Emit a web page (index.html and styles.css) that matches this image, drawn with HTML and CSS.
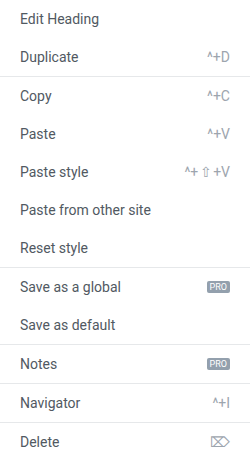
FILE: index.html
```html
<!DOCTYPE html>
<html lang="en">
<head>
<meta charset="UTF-8">
<meta name="viewport" content="width=device-width, initial-scale=1.0">
<link rel="stylesheet" href="styles.css">
<title>Context menu</title>
</head>
<body>
<div class="menu">
  <div class="group">
    <div class="item"><span class="title">Edit Heading</span></div>
    <div class="item"><span class="title">Duplicate</span><span class="shortcut">^+D</span></div>
  </div>
  <div class="group">
    <div class="item"><span class="title">Copy</span><span class="shortcut">^+C</span></div>
    <div class="item"><span class="title">Paste</span><span class="shortcut">^+V</span></div>
    <div class="item"><span class="title">Paste style</span><span class="shortcut">^+&#8202;&#8679;&#8202;+V</span></div>
    <div class="item"><span class="title">Paste from other site</span></div>
    <div class="item"><span class="title">Reset style</span></div>
  </div>
  <div class="group">
    <div class="item"><span class="title">Save as a global</span><span class="pro">PRO</span></div>
    <div class="item"><span class="title">Save as default</span></div>
  </div>
  <div class="group">
    <div class="item"><span class="title">Notes</span><span class="pro">PRO</span></div>
  </div>
  <div class="group">
    <div class="item"><span class="title">Navigator</span><span class="shortcut">^+I</span></div>
  </div>
  <div class="group">
    <div class="item"><span class="title">Delete</span><span class="shortcut icon">&#8998;</span></div>
  </div>
</div>
</body>
</html>
```

FILE: styles.css
```css
body {
  margin: 0;
  background-color: #ffffff;
  font-family: Roboto, "Liberation Sans", sans-serif;
}

.menu {
  width: 250px;
}

.group + .group {
  border-top: 1px solid #e6e8ea;
}

.item {
  display: flex;
  align-items: center;
  justify-content: space-between;
  height: 38px;
  padding: 0 20px;
  font-size: 14px;
  color: #515962;
}

.shortcut {
  font-size: 14px;
  color: #9da5ae;
}

.shortcut.icon {
  font-size: 14px;
}

.pro {
  background-color: #93a0ad;
  color: #ffffff;
  font-size: 9px;
  line-height: 11px;
  padding: 1px 3px 0;
  border-radius: 2px;
}
```
